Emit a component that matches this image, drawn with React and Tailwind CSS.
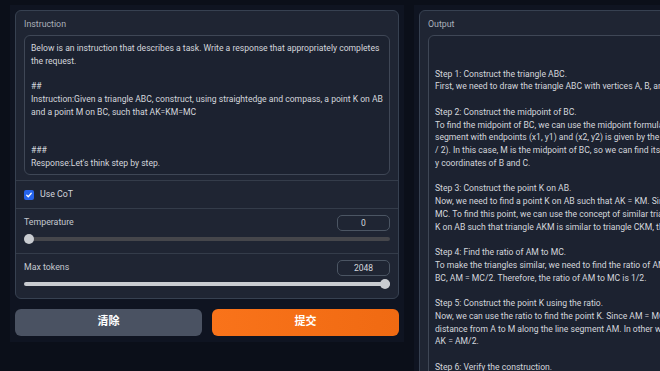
import React from 'react';

const instruction = [
  'Below is an instruction that describes a task. Write a response that appropriately completes',
  'the request.',
  '',
  '##',
  'Instruction:Given a triangle ABC, construct, using straightedge and compass, a point K on AB',
  'and a point M on BC, such that AK=KM=MC',
  '',
  '',
  '###',
  'Response:Let\'s think step by step.',
];

const output = [
  '',
  '',
  'Step 1: Construct the triangle ABC.',
  'First, we need to draw the triangle ABC with vertices A, B, and C.',
  '',
  'Step 2: Construct the midpoint of BC.',
  'To find the midpoint of BC, we can use the midpoint formula. The midpoint of a line',
  'segment with endpoints (x1, y1) and (x2, y2) is given by the coordinates ((x1 + x2) / 2, (y1 + y2)',
  '/ 2). In this case, M is the midpoint of BC, so we can find its coordinates by averaging the x and',
  'y coordinates of B and C.',
  '',
  'Step 3: Construct the point K on AB.',
  'Now, we need to find a point K on AB such that AK = KM. Since M is the midpoint of BC, AM =',
  'MC. To find this point, we can use the concept of similar triangles. If we can find a point',
  'K on AB such that triangle AKM is similar to triangle CKM, then AK = KM.',
  '',
  'Step 4: Find the ratio of AM to MC.',
  'To make the triangles similar, we need to find the ratio of AM to MC. Since M is the midpoint of',
  'BC, AM = MC/2. Therefore, the ratio of AM to MC is 1/2.',
  '',
  'Step 5: Construct the point K using the ratio.',
  'Now, we can use the ratio to find the point K. Since AM = MC/2, we can find K by taking half the',
  'distance from A to M along the line segment AM. In other words, K is the midpoint of AM, so',
  'AK = AM/2.',
  '',
  'Step 6: Verify the construction.',
];

function Lines({ lines }) {
  return (
    <div className="text-[8.6px] leading-[12.75px] text-[#d4d7dd] whitespace-pre">
      {lines.map((l, i) => (
        <div key={i} className="h-[12.75px]">{l || ' '}</div>
      ))}
    </div>
  );
}

function NumberBox({ value }) {
  return (
    <div className="w-[53px] h-[16px] rounded-[5px] border border-[#4b5563] flex items-center justify-center text-[8.5px] text-[#d4d7dd]">
      {value}
    </div>
  );
}

export default function App() {
  return (
    <div
      className="w-[660px] h-[371px] overflow-hidden bg-[#0b0f19] flex"
      style={{ fontFamily: 'Roboto, "Noto Sans CJK SC", sans-serif' }}
    >
      <div className="ml-[10px] mt-[5px] w-[394px] h-[337px] shrink-0 bg-[#0f1421] px-[5px] pt-[5px] flex flex-col gap-[10px]">
        <div className="h-[289px] rounded-[6px] border border-[#374151] bg-[#1f2533] flex flex-col">
          <div className="px-[8px] pt-[7px] pb-[5px]">
            <div className="text-[8.8px] text-[#aab0ba] h-[12px] leading-[12px]">Instruction</div>
            <div className="mt-[5px] h-[140px] rounded-[6px] border border-[#3f4756] bg-[#1c2230] px-[6px] pt-[6px]">
              <Lines lines={instruction} />
            </div>
          </div>
          <div className="border-t border-[#343c4a] h-[28px] px-[8px] flex items-center gap-[6px]">
            <div className="w-[10px] h-[10px] rounded-[2px] bg-[#2563eb] flex items-center justify-center">
              <svg width="8" height="8" viewBox="0 0 16 16" fill="none" stroke="white" strokeWidth="2.5" strokeLinecap="round" strokeLinejoin="round">
                <path d="M3.5 8.5l3 3 6-7" />
              </svg>
            </div>
            <span className="text-[8.8px] text-[#d4d7dd]">Use CoT</span>
          </div>
          <div className="border-t border-[#343c4a] h-[45px] px-[8px] pt-[6px]">
            <div className="flex items-center justify-between">
              <span className="text-[8.8px] text-[#c4c8cf]">Temperature</span>
              <NumberBox value="0" />
            </div>
            <div className="relative mt-[3px] h-[10px] flex items-center">
              <div className="w-full h-[4px] rounded-full bg-[#45464b]" />
              <div className="absolute left-0 w-[10px] h-[10px] rounded-full bg-[#c9ccd1]" />
            </div>
          </div>
          <div className="border-t border-[#343c4a] flex-1 px-[8px] pt-[6px]">
            <div className="flex items-center justify-between">
              <span className="text-[8.8px] text-[#c4c8cf]">Max tokens</span>
              <NumberBox value="2048" />
            </div>
            <div className="relative mt-[3px] h-[10px] flex items-center">
              <div className="w-full h-[4px] rounded-full bg-[#c9ccd1]" />
              <div className="absolute right-0 w-[10px] h-[10px] rounded-full bg-[#c9ccd1]" />
            </div>
          </div>
        </div>
        <div className="flex gap-[10px] h-[27px]">
          <button className="flex-1 rounded-[6px] bg-[#4a5262] text-white text-[11px] font-bold">清除</button>
          <button className="flex-1 rounded-[6px] bg-gradient-to-r from-[#f9731a] to-[#f06a12] text-white text-[11px] font-bold">提交</button>
        </div>
      </div>
      <div className="ml-[10px] mt-[5px] w-[420px] shrink-0 bg-[#0f1421] pl-[5px] pt-[5px]">
        <div className="h-[400px] rounded-[6px] border border-[#374151] bg-[#1f2533] px-[8px] pt-[7px]">
          <div className="text-[8.8px] text-[#aab0ba] h-[12px] leading-[12px]">Output</div>
          <div className="mt-[5px] h-[380px] rounded-[6px] border border-[#3f4756] bg-[#1c2230] px-[6px] pt-[6px]">
            <Lines lines={output} />
          </div>
        </div>
      </div>
    </div>
  );
}
